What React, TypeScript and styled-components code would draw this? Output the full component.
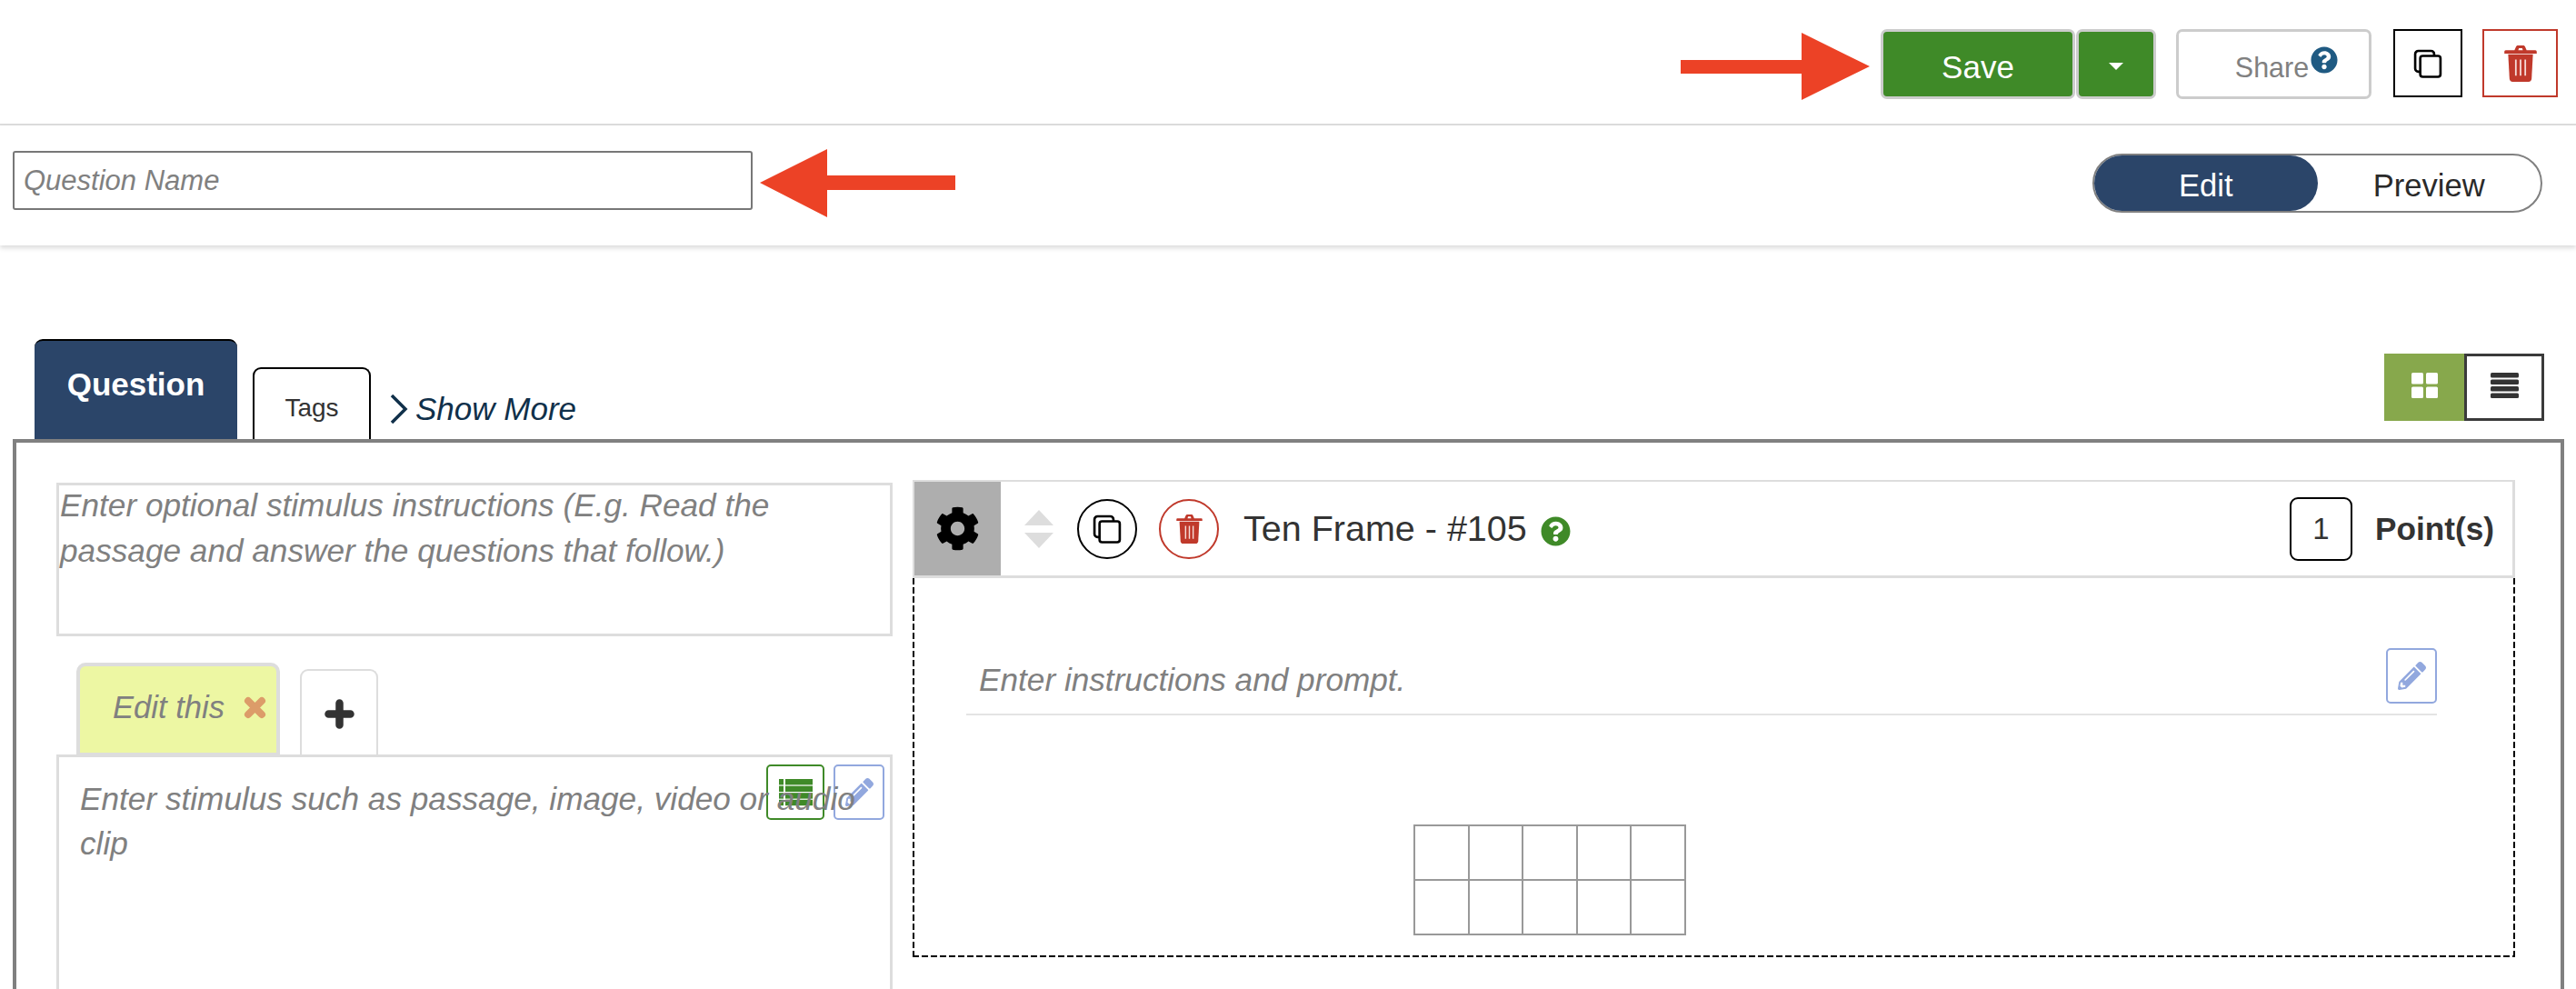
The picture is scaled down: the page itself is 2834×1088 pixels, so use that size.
import React from 'react'
import styled, { createGlobalStyle } from 'styled-components'
import { FaCog, FaPencilAlt, FaQuestionCircle } from 'react-icons/fa'

const GlobalStyle = createGlobalStyle`
  html, body {
    margin: 0;
    padding: 0;
    height: 100%;
    overflow: hidden;
    background: #fff;
  }
  * {
    box-sizing: border-box;
  }
  body {
    font-family: "Liberation Sans", Arial, sans-serif;
    color: #333;
  }
`

const Page = styled.div`
  width: 2834px;
  height: 1088px;
  overflow: hidden;
`

const TopBar = styled.header`
  height: 138px;
  padding: 32px 20px 0 0;
  display: flex;
  justify-content: flex-end;
  align-items: flex-start;
  border-bottom: 2px solid #ddd;
`

const SaveArrow = styled.svg`
  margin-top: 4px;
`

const SaveButton = styled.button`
  width: 214px;
  height: 77px;
  margin-left: 12px;
  padding: 6px 0 0;
  background: #3f8a28;
  border: 3px solid #ccc;
  border-radius: 7px;
  color: #fff;
  font: 35px "Liberation Sans", Arial, sans-serif;
`

const CaretButton = styled(SaveButton)`
  width: 88px;
  margin-left: 1px;
  padding: 0;
  display: flex;
  align-items: center;
  justify-content: center;
`

const Caret = styled.span`
  width: 0;
  height: 0;
  border-left: 8px solid transparent;
  border-right: 8px solid transparent;
  border-top: 8px solid #fff;
  margin-top: 4px;
`

const ShareButton = styled.button`
  width: 215px;
  height: 77px;
  margin-left: 22px;
  padding: 7px 0 0 28px;
  display: flex;
  align-items: center;
  justify-content: center;
  background: #fff;
  border: 3px solid #ccc;
  border-radius: 7px;
  color: #808080;
  font: 30.5px "Liberation Sans", Arial, sans-serif;

  svg {
    width: 30px;
    height: 30px;
    margin: -17px 0 0 2px;
    color: #1f5a82;
  }
`

const IconBox = styled.button<{ $color: string; $width: number; $gap: number }>`
  width: ${(p) => p.$width}px;
  height: 75px;
  margin-left: ${(p) => p.$gap}px;
  padding: 0;
  display: flex;
  align-items: center;
  justify-content: center;
  background: #fff;
  border: 2px solid ${(p) => p.$color};
`

const NameBar = styled.div`
  height: 132px;
  padding: 28px 37px 0 14px;
  display: flex;
  align-items: flex-start;
  box-shadow: 0 3px 5px rgba(0, 0, 0, 0.14);
`

const NameInput = styled.input`
  width: 814px;
  height: 65px;
  padding: 0 10px;
  border: 2px solid #777;
  border-radius: 3px;
  font: italic 31px "Liberation Sans", Arial, sans-serif;

  &::placeholder {
    color: #808080;
    opacity: 1;
  }
`

const NameArrow = styled.svg`
  margin: -2px 0 0 8px;
`

const ModeToggle = styled.div`
  width: 495px;
  height: 65px;
  margin: 3px 0 0 auto;
  display: flex;
  border: 2px solid #808080;
  border-radius: 33px;
  font-size: 34.6px;
`

const ModeOption = styled.div<{ $active?: boolean }>`
  width: 246px;
  padding-top: 5px;
  display: flex;
  align-items: center;
  justify-content: center;
  border-radius: 32px;
  background: ${(p) => (p.$active ? '#2b4569' : 'transparent')};
  color: ${(p) => (p.$active ? '#fff' : '#2a2a2a')};
`

const TabRow = styled.div`
  height: 110px;
  margin-top: 103px;
  padding: 0 35px 0 38px;
  display: flex;
  align-items: flex-end;
`

const QuestionTab = styled.div`
  width: 223px;
  height: 110px;
  padding-top: 28px;
  background: #2b4569;
  border-top: 2px solid #000;
  border-radius: 9px 9px 0 0;
  color: #fff;
  font-size: 35px;
  font-weight: 700;
  line-height: 40px;
  text-align: center;
`

const TagsTab = styled.div`
  width: 130px;
  height: 79px;
  margin-left: 17px;
  padding-top: 26px;
  border: 2px solid #000;
  border-bottom: 0;
  border-radius: 9px 9px 0 0;
  font-size: 28px;
  line-height: 34px;
  text-align: center;
`

const ShowMore = styled.div`
  height: 40px;
  margin: 0 0 13px 21px;
  display: flex;
  align-items: center;
  gap: 8px;
  color: #10304a;
  font-size: 35px;
  font-style: italic;
`

const ViewToggle = styled.div`
  height: 74px;
  margin-left: auto;
  align-self: flex-start;
  margin-top: 16px;
  display: flex;
`

const ViewOption = styled.div<{ $active?: boolean }>`
  width: 88px;
  display: flex;
  align-items: center;
  justify-content: center;
  padding-bottom: 5px;
  background: ${(p) => (p.$active ? '#87a84c' : '#fff')};
  border: ${(p) => (p.$active ? '0' : '3px solid #3a3a3a')};
`

const Workspace = styled.main`
  height: 605px;
  margin: 0 13px 0 14px;
  padding: 44px 50px 0 44px;
  display: grid;
  grid-template-columns: 920px 1fr;
  column-gap: 22px;
  align-items: start;
  border: 4px solid #808080;
  border-bottom: 0;
  overflow: hidden;
`

const LeftColumn = styled.section`
  display: flex;
  flex-direction: column;
`

const Placeholder = styled.div`
  color: #808080;
  font-size: 35.2px;
  font-style: italic;
  line-height: 50px;
`

const InstructionBox = styled.div`
  height: 169px;
  padding: 0 40px 0 1px;
  border: 3px solid #ddd;

  ${Placeholder} {
    margin-top: -3px;
  }
`

const StimulusTabs = styled.div`
  margin: 29px 0 -2px;
  padding-left: 22px;
  display: flex;
  align-items: flex-end;
  position: relative;
  z-index: 1;
`

const EditTab = styled.div`
  width: 224px;
  height: 103px;
  padding: 0 0 4px 36px;
  display: flex;
  align-items: center;
  gap: 21px;
  background: #edf7a3;
  border: 4px solid #ddd;
  border-radius: 10px 10px 0 0;
  color: #808080;
  font-size: 34.6px;
  font-style: italic;
`

const AddTab = styled.div`
  width: 86px;
  height: 96px;
  margin-left: 22px;
  display: flex;
  align-items: center;
  justify-content: center;
  border: 2px solid #ddd;
  border-bottom: 0;
  border-radius: 9px 9px 0 0;
`

const StimulusBox = styled.div`
  height: 400px;
  padding: 21px 30px 0 23px;
  position: relative;
  border: 3px solid #ddd;

  ${Placeholder} {
    position: relative;
    line-height: 49px;
  }
`

const StimulusTools = styled.div`
  position: absolute;
  top: 8px;
  right: 6px;
  display: flex;
  gap: 10px;
`

const ToolButton = styled.div<{ $color: string; $width: number }>`
  width: ${(p) => p.$width}px;
  height: 61px;
  display: flex;
  align-items: center;
  justify-content: center;
  border: 2px solid ${(p) => p.$color};
  border-radius: 5px;
  color: ${(p) => p.$color};
`

const RightColumn = styled.section`
  margin-top: -3px;
`

const CardHeader = styled.div`
  height: 108px;
  padding-right: 20px;
  display: flex;
  align-items: center;
  border: solid #ddd;
  border-width: 2px 3px 3px 2px;
`

const GearCell = styled.div`
  width: 95px;
  align-self: stretch;
  display: flex;
  align-items: center;
  justify-content: center;
  background: #aeaeae;
  color: #000;

  svg {
    width: 49px;
    height: 49px;
  }
`

const SortArrows = styled.div`
  margin-left: 26px;
  display: flex;
  flex-direction: column;
  gap: 8px;
`

const SortArrow = styled.span<{ $down?: boolean }>`
  width: 0;
  height: 0;
  border-left: 16.5px solid transparent;
  border-right: 16.5px solid transparent;
  ${(p) => (p.$down ? 'border-top' : 'border-bottom')}: 17px solid #ddd;
`

const CircleButton = styled.div<{ $color: string; $gap: number }>`
  width: 66px;
  height: 66px;
  margin-left: ${(p) => p.$gap}px;
  display: flex;
  align-items: center;
  justify-content: center;
  border: 2px solid ${(p) => p.$color};
  border-radius: 50%;
`

const CardTitle = styled.div`
  margin-left: 27px;
  color: #333;
  font-size: 39.5px;
`

const TitleHelp = styled.span`
  margin: 6px 0 0 15px;
  display: flex;
  color: #3f8a28;

  svg {
    width: 33px;
    height: 33px;
  }
`

const PointsBox = styled.div`
  width: 69px;
  height: 70px;
  margin-left: auto;
  display: flex;
  align-items: center;
  justify-content: center;
  border: 2px solid #000;
  border-radius: 9px;
  font-size: 33px;
`

const PointsLabel = styled.div`
  margin-left: 25px;
  font-size: 35.2px;
  font-weight: 700;
`

const dashes = (direction: string) =>
  `repeating-linear-gradient(${direction}, #000 0 7px, transparent 7px 10px)`

const CardBody = styled.div`
  height: 417px;
  padding: 77px 86px 0 59px;
  background-image: ${dashes('to bottom')}, ${dashes('to bottom')}, ${dashes('to right')};
  background-size: 2px 100%, 2px 100%, 100% 2px;
  background-position: left top, right top, left bottom;
  background-repeat: no-repeat;
`

const PromptRow = styled.div`
  height: 74px;
  padding-left: 14px;
  display: flex;
  justify-content: space-between;
  align-items: flex-start;
  border-bottom: 2px solid #e4e4e4;

  ${Placeholder} {
    margin-top: 10px;
  }
`

const TenFrame = styled.div`
  width: 300px;
  margin: 120px 0 0 492px;
  display: grid;
  grid-template-columns: repeat(5, 1fr);
  grid-auto-rows: 60px;
  border-top: 2px solid #999;
  border-left: 2px solid #999;
`

const FrameCell = styled.div`
  border-right: 2px solid #999;
  border-bottom: 2px solid #999;
`

const CopyIcon = () => (
  <svg width="32" height="32" viewBox="1 0.6 23 23" fill="none" stroke="#000" strokeWidth="1.9">
    <path d="M6.5 18.5H5A2.5 2.5 0 0 1 2.5 16V4.5A2.5 2.5 0 0 1 5 2h10a2.5 2.5 0 0 1 2.5 2.5V6" />
    <rect x="6.5" y="6" width="16" height="16.5" rx="2" />
  </svg>
)

const TrashIcon = ({ width, height }: { width: number; height: number }) => (
  <svg width={width} height={height} viewBox="0 0 24 27" fill="#c0392b">
    <path d="M7.5 3.5 8.6 1C8.9.4 9.4 0 10 0h4c.6 0 1.1.4 1.4 1l1.1 2.5h6.5c.6 0 1 .5 1 1V6H0V4.5c0-.5.4-1 1-1Zm2.8 0h3.4L13.2 2h-2.4Z" />
    <path d="M2.8 6.5h18.4l-1 18.3c-.1 1.2-1 2.2-2.2 2.2H6c-1.2 0-2.100-1-2.200-2.200Z" />
    <path d="M8.5 10.5v12M12 10.5v12M15.5 10.5v12" stroke="#f6dcd8" strokeWidth="1.2" fill="none" />
  </svg>
)

const GridIcon = () => (
  <svg width="29" height="28" viewBox="0 0 29 28" fill="#fff">
    <rect width="13" height="12.5" rx="1.5" />
    <rect x="16" width="13" height="12.5" rx="1.5" />
    <rect y="15.5" width="13" height="12.5" rx="1.5" />
    <rect x="16" y="15.5" width="13" height="12.5" rx="1.5" />
  </svg>
)

const BarsIcon = () => (
  <svg width="31" height="28" viewBox="0 0 31 28" fill="#333">
    <rect width="31" height="5.5" rx="1.5" />
    <rect y="7.5" width="31" height="5.5" rx="1.5" />
    <rect y="15" width="31" height="5.5" rx="1.5" />
    <rect y="22.5" width="31" height="5.5" rx="1.5" />
  </svg>
)

const RowsIcon = () => (
  <svg width="37" height="30" viewBox="0 0 37 30" fill="#3f8a28">
    {[0, 7.6, 15.2, 22.8].map((y) => (
      <React.Fragment key={y}>
        <rect y={y} width="5" height="6.4" />
        <rect x="7" y={y} width="30" height="6.4" />
      </React.Fragment>
    ))}
  </svg>
)

const CloseIcon = () => (
  <svg width="25" height="25" viewBox="0 0 25 25" fill="none" stroke="#dc9c69" strokeWidth="8" strokeLinecap="round">
    <path d="M5 5l15 15M20 5L5 20" />
  </svg>
)

const PlusIcon = () => (
  <svg width="33" height="33" viewBox="0 0 33 33" fill="none" stroke="#333" strokeWidth="8.5" strokeLinecap="round">
    <path d="M16.5 4.5v24M4.5 16.5h24" />
  </svg>
)

const frameCells = Array.from({ length: 10 }, (_, i) => i)

export default function App() {
  return (
    <Page>
      <GlobalStyle />
      <TopBar>
        <SaveArrow width="208" height="74" viewBox="0 0 208 74">
          <path d="M0 30h133V0l75 37-75 37V45H0Z" fill="#ec4226" />
        </SaveArrow>
        <SaveButton>Save</SaveButton>
        <CaretButton aria-label="More save options">
          <Caret />
        </CaretButton>
        <ShareButton>
          Share
          <FaQuestionCircle />
        </ShareButton>
        <IconBox $color="#000" $width={76} $gap={24} aria-label="Copy">
          <CopyIcon />
        </IconBox>
        <IconBox $color="#c0392b" $width={83} $gap={22} aria-label="Delete">
          <TrashIcon width={36} height={40} />
        </IconBox>
      </TopBar>

      <NameBar>
        <NameInput placeholder="Question Name" />
        <NameArrow width="215" height="75" viewBox="0 0 215 75">
          <path d="M215 29H74V0L0 37l74 38V45h141Z" fill="#ec4226" />
        </NameArrow>
        <ModeToggle>
          <ModeOption $active>Edit</ModeOption>
          <ModeOption>Preview</ModeOption>
        </ModeToggle>
      </NameBar>

      <TabRow>
        <QuestionTab>Question</QuestionTab>
        <TagsTab>Tags</TagsTab>
        <ShowMore>
          <svg width="20" height="32" viewBox="0 0 20 32" fill="none" stroke="#10304a" strokeWidth="3.5">
            <path d="M2 1l15 15L2 31" />
          </svg>
          Show More
        </ShowMore>
        <ViewToggle>
          <ViewOption $active>
            <GridIcon />
          </ViewOption>
          <ViewOption>
            <BarsIcon />
          </ViewOption>
        </ViewToggle>
      </TabRow>

      <Workspace>
        <LeftColumn>
          <InstructionBox>
            <Placeholder>
              Enter optional stimulus instructions (E.g. Read the passage and answer the questions that follow.)
            </Placeholder>
          </InstructionBox>
          <StimulusTabs>
            <EditTab>
              Edit this
              <CloseIcon />
            </EditTab>
            <AddTab>
              <PlusIcon />
            </AddTab>
          </StimulusTabs>
          <StimulusBox>
            <StimulusTools>
              <ToolButton $color="#3f8a28" $width={64}>
                <RowsIcon />
              </ToolButton>
              <ToolButton $color="#92a8de" $width={56}>
                <FaPencilAlt size={31} />
              </ToolButton>
            </StimulusTools>
            <Placeholder>Enter stimulus such as passage, image, video or audio clip</Placeholder>
          </StimulusBox>
        </LeftColumn>

        <RightColumn>
          <CardHeader>
            <GearCell>
              <FaCog />
            </GearCell>
            <SortArrows>
              <SortArrow />
              <SortArrow $down />
            </SortArrows>
            <CircleButton $color="#000" $gap={26}>
              <CopyIcon />
            </CircleButton>
            <CircleButton $color="#c0392b" $gap={24}>
              <TrashIcon width={29} height={32} />
            </CircleButton>
            <CardTitle>Ten Frame - #105</CardTitle>
            <TitleHelp>
              <FaQuestionCircle />
            </TitleHelp>
            <PointsBox>1</PointsBox>
            <PointsLabel>Point(s)</PointsLabel>
          </CardHeader>
          <CardBody>
            <PromptRow>
              <Placeholder>Enter instructions and prompt.</Placeholder>
              <ToolButton $color="#92a8de" $width={56}>
                <FaPencilAlt size={31} />
              </ToolButton>
            </PromptRow>
            <TenFrame>
              {frameCells.map((cell) => (
                <FrameCell key={cell} />
              ))}
            </TenFrame>
          </CardBody>
        </RightColumn>
      </Workspace>
    </Page>
  )
}
